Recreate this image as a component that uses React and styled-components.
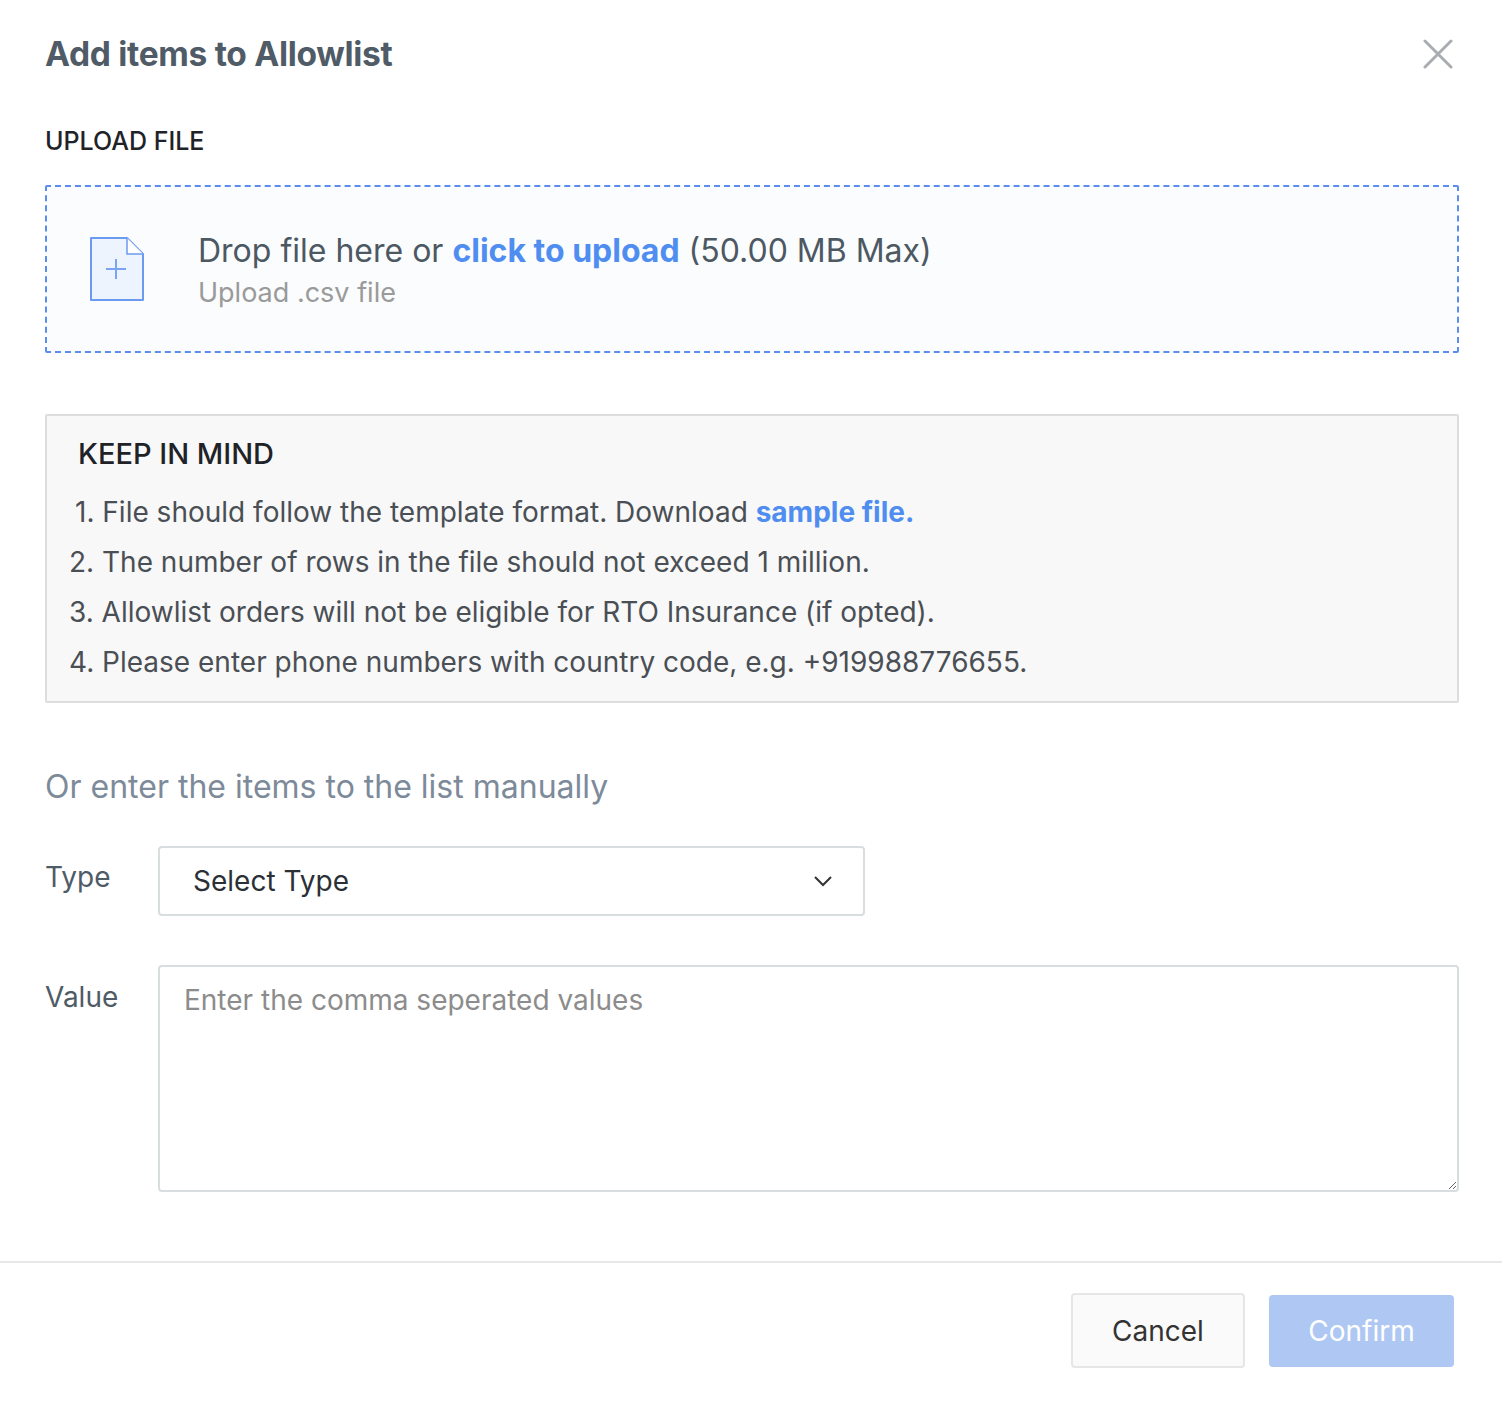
import React from "react";
import styled, { createGlobalStyle } from "styled-components";

const Global = createGlobalStyle`
  body { margin: 0; background: #fff; font-family: Inter, "Noto Sans", sans-serif; }
`;
const Modal = styled.div`width: 1502px; min-height: 1404px; background: #fff;`;
const Body = styled.div`padding: 28px 43px 0 45px; display: flex; flex-direction: column;`;
const Header = styled.div`display: flex; justify-content: space-between; align-items: center; height: 52px;`;
const Title = styled.h1`margin: 0; font-size: 33.5px; font-weight: 700; color: #4f5b66; letter-spacing: -0.3px;`;
const Close = styled.button`border: 0; background: none; padding: 0; margin-right: 6px; cursor: pointer; display: flex;`;
const Label = styled.div`margin-top: 46px; font-size: 25px; font-weight: 500; color: #1f2328;`;
const Drop = styled.div`
  margin-top: 29px; height: 168px; background: #fbfcfe; border: 2px dashed #5b8def; border-radius: 2px;
  display: flex; align-items: center; gap: 54px; padding-left: 43px; box-sizing: border-box;
`;
const DropText = styled.div`display: flex; flex-direction: column; gap: 6px; margin-top: 2px;`;
const Main = styled.div`font-size: 32px; color: #4c5862;`;
const Link = styled.span`color: #4f8ef0; font-weight: 700;`;
const Sub = styled.div`font-size: 27px; color: #9a9a9a;`;
const Info = styled.div`
  margin-top: 61px; background: #f8f8f8; border: 2px solid #dddddd; border-radius: 2px;
  padding: 20px 22px 14px 22px; display: flex; flex-direction: column;
`;
const InfoTitle = styled.div`font-size: 29px; font-weight: 500; color: #1f2328; padding-left: 9px; margin-bottom: 16px;`;
const Item = styled.div`font-size: 28px; color: #4a4f55; line-height: 50px; padding-left: ${p => p.$first ? 6 : 0}px;`;
const Manual = styled.div`margin-top: 64px; font-size: 32px; color: #7d8a9a;`;
const Row = styled.div`display: flex; align-items: flex-start; margin-top: ${p => p.$mt}px;`;
const FieldLabel = styled.div`width: 113px; font-size: 28px; color: #4f5b66; padding-top: ${p => p.$pt}px;`;
const Select = styled.div`
  width: 707px; height: 70px; border: 2px solid #d8dde0; border-radius: 4px; box-sizing: border-box;
  display: flex; align-items: center; justify-content: space-between; padding: 0 30px 0 33px;
  font-size: 28px; color: #2b3036;
`;
const TextArea = styled.textarea`
  flex: 1; height: 227px; border: 2px solid #d8dde0; border-radius: 4px; box-sizing: border-box;
  padding: 16px 24px; font-family: Inter, sans-serif; font-size: 28px; color: #333; resize: vertical;
  &::placeholder { color: #8c8c8c; }
`;
const Footer = styled.div`
  margin-top: 69px; border-top: 2px solid #e8e8e8; display: flex; justify-content: flex-end;
  gap: 24px; padding: 30px 48px 0 0; align-items: center;
`;
const Btn = styled.button`
  font-family: Inter, sans-serif; font-size: 28px; border-radius: 4px; cursor: pointer;
  width: ${p => p.$w}px; height: ${p => p.$h}px;
  background: ${p => p.$primary ? "#aec8f3" : "#fafafa"};
  color: ${p => p.$primary ? "#fff" : "#333"};
  border: ${p => p.$primary ? "none" : "2px solid #e6e6e6"};
`;

export default function App() {
  return (
    <Modal>
      <Global />
      <Body>
        <Header>
          <Title>Add items to Allowlist</Title>
          <Close aria-label="close">
            <svg width="30" height="30" viewBox="0 0 30 30"><path d="M2 2L28 28M28 2L2 28" stroke="#a9adb1" strokeWidth="3" strokeLinecap="round" /></svg>
          </Close>
        </Header>
        <Label>UPLOAD FILE</Label>
        <Drop>
          <svg width="54" height="64" viewBox="0 0 54 64">
            <path d="M1 1H37L53 17V63H1Z" fill="#eef4fe" stroke="#6b9af0" strokeWidth="2" strokeLinejoin="round" />
            <path d="M37 1V17H53" fill="#ffffff" stroke="#6b9af0" strokeWidth="1.5" />
            <path d="M26 22V42M16 32H36" stroke="#7aa5f2" strokeWidth="2" />
          </svg>
          <DropText>
            <Main>Drop file here or <Link>click to upload</Link> (50.00 MB Max)</Main>
            <Sub>Upload .csv file</Sub>
          </DropText>
        </Drop>
        <Info>
          <InfoTitle>KEEP IN MIND</InfoTitle>
          <Item $first>1. File should follow the template format. Download <Link>sample file.</Link></Item>
          <Item>2. The number of rows in the file should not exceed 1 million.</Item>
          <Item>3. Allowlist orders will not be eligible for RTO Insurance (if opted).</Item>
          <Item>4. Please enter phone numbers with country code, e.g. +919988776655.</Item>
        </Info>
        <Manual>Or enter the items to the list manually</Manual>
        <Row $mt={40}>
          <FieldLabel $pt={14}>Type</FieldLabel>
          <Select>
            <span>Select Type</span>
            <svg width="20" height="12" viewBox="0 0 20 12"><path d="M2 2L10 10L18 2" fill="none" stroke="#333" strokeWidth="2" /></svg>
          </Select>
        </Row>
        <Row $mt={49}>
          <FieldLabel $pt={15}>Value</FieldLabel>
          <TextArea placeholder="Enter the comma seperated values" />
        </Row>
      </Body>
      <Footer>
        <Btn $w={174} $h={75}>Cancel</Btn>
        <Btn $primary $w={185} $h={72}>Confirm</Btn>
      </Footer>
    </Modal>
  );
}
